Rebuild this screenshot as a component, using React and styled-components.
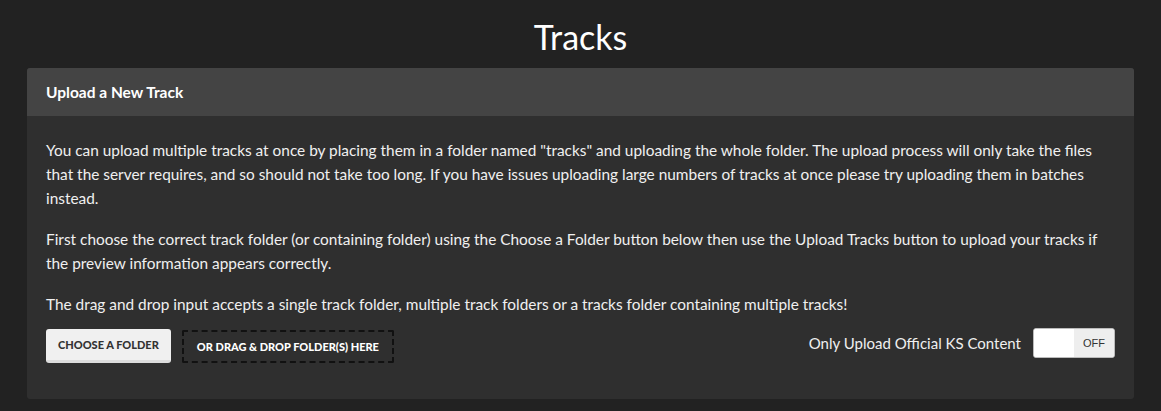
import React, { useState } from "react";
import styled, { createGlobalStyle } from "styled-components";

const GlobalStyle = createGlobalStyle`
  html, body {
    margin: 0;
    padding: 0;
    background: #222222;
    font-family: Lato, "Open Sans", sans-serif;
    color: #f2f2f2;
  }
`;

const Page = styled.div`
  padding: 0 27px 12px;
`;

const Title = styled.h1`
  margin: 0;
  padding-top: 15px;
  height: 53px;
  text-align: center;
  font-size: 34px;
  font-weight: 400;
  line-height: 44px;
  color: #ffffff;
`;

const Card = styled.section`
  background: #2f2f2f;
  border-radius: 3px;
  overflow: hidden;
`;

const CardHeader = styled.div`
  background: #444444;
  height: 48px;
  padding: 0 19px;
  display: flex;
  align-items: center;
  font-size: 15.5px;
  font-weight: 700;
  color: #ffffff;
`;

const CardBody = styled.div`
  padding: 22px 19px 36px;
`;

const Text = styled.p`
  margin: 0 0 17px;
  font-size: 15.4px;
  line-height: 24px;
  color: #f0f0f0;
  &:last-of-type {
    margin-bottom: 13px;
  }
`;

const Actions = styled.div`
  display: flex;
  align-items: center;
  gap: 11px;
`;

const Button = styled.button`
  height: 34px;
  padding: 0 12px 1px;
  border: none;
  border-bottom: 3px solid #dcdcdc;
  border-radius: 3px;
  background: #f0f0f0;
  color: #333333;
  font-family: inherit;
  font-size: 11px;
  font-weight: 900;
  text-transform: uppercase;
  cursor: pointer;
`;

const DropZone = styled.div`
  height: 29px;
  padding: 0 13px;
  display: flex;
  align-items: center;
  border: 2px dashed #111111;
  border-radius: 2px;
  color: #ffffff;
  font-size: 11px;
  font-weight: 900;
  text-transform: uppercase;
`;

const Spacer = styled.div`
  flex: 1;
`;

const ToggleLabel = styled.span`
  font-size: 15px;
  color: #f0f0f0;
  margin-right: 1px;
  margin-top: -6px;
`;

const Toggle = styled.button`
  display: flex;
  width: 82px;
  height: 30px;
  margin-top: -6px;
  padding: 0;
  border: 1px solid #bbbbbb;
  border-radius: 3px;
  overflow: hidden;
  background: #ffffff;
  cursor: pointer;
`;

const ToggleKnob = styled.span`
  flex: 1;
  background: ${p => (p.$on ? "#eeeeee" : "#ffffff")};
`;

const ToggleState = styled.span`
  width: 40px;
  height: 100%;
  display: flex;
  align-items: center;
  justify-content: center;
  background: ${p => (p.$on ? "#4caf50" : "#eeeeee")};
  color: ${p => (p.$on ? "#ffffff" : "#333333")};
  font-family: inherit;
  font-size: 11px;
`;

export default function App() {
  const [official, setOfficial] = useState(false);

  return (
    <Page>
      <GlobalStyle />
      <Title>Tracks</Title>
      <Card>
        <CardHeader>Upload a New Track</CardHeader>
        <CardBody>
          <Text>
            You can upload multiple tracks at once by placing them in a folder named "tracks" and uploading the whole
            folder. The upload process will only take the files that the server requires, and so should not take too
            long. If you have issues uploading large numbers of tracks at once please try uploading them in batches
            instead.
          </Text>
          <Text>
            First choose the correct track folder (or containing folder) using the Choose a Folder button below then use
            the Upload Tracks button to upload your tracks if the preview information appears correctly.
          </Text>
          <Text>
            The drag and drop input accepts a single track folder, multiple track folders or a tracks folder containing
            multiple tracks!
          </Text>
          <Actions>
            <Button>Choose a Folder</Button>
            <DropZone>Or Drag &amp; Drop Folder(s) Here</DropZone>
            <Spacer />
            <ToggleLabel>Only Upload Official KS Content</ToggleLabel>
            <Toggle onClick={() => setOfficial(!official)}>
              <ToggleKnob $on={official} />
              <ToggleState $on={official}>{official ? "ON" : "OFF"}</ToggleState>
            </Toggle>
          </Actions>
        </CardBody>
      </Card>
    </Page>
  );
}
